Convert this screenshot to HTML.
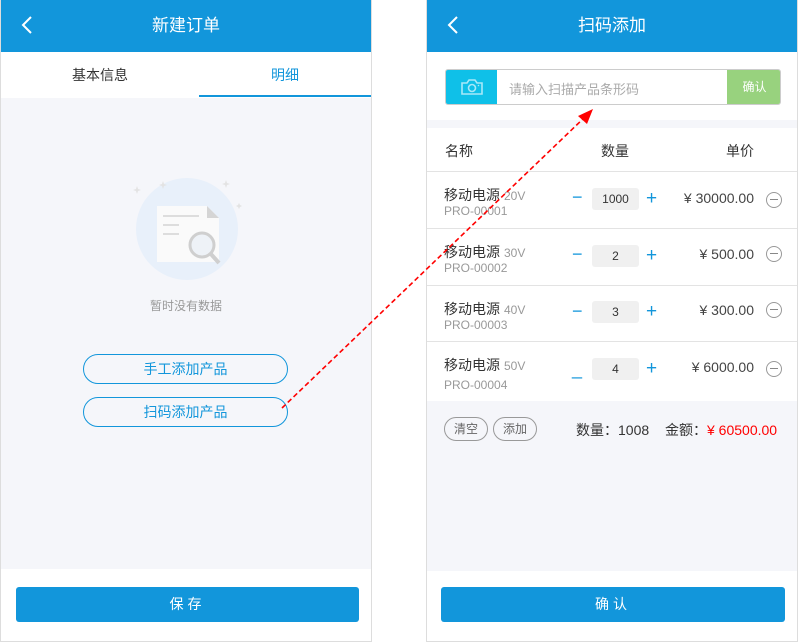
<!DOCTYPE html>
<html><head><meta charset="utf-8"><style>
*{margin:0;padding:0;box-sizing:border-box}
body{width:798px;height:642px;background:#fff;position:relative;overflow:hidden;font-family:"Liberation Sans","Noto Sans CJK SC",sans-serif;color:#333}
.a{position:absolute}
.panel{position:absolute;top:0;width:372px;height:642px;border:1px solid #ddd;border-top:none;background:#fff}
.hdr{position:absolute;left:0;top:0;right:0;height:52px;background:#1296db;color:#fff;font-size:17px;text-align:center;line-height:52px}
.back{position:absolute;left:20px;top:15px}
.btn{position:absolute;background:#1296db;color:#fff;font-size:14px;text-align:center;line-height:35px;border-radius:3px;letter-spacing:4px}
.ob{position:absolute;left:82px;width:205px;height:30px;border:1px solid #1296db;border-radius:15px;color:#1296db;font-size:14px;text-align:center;line-height:28px;background:#f5f6fa}
.row{position:absolute;left:0;right:0;border-top:1px solid #e3e3e3;background:#fff}
.nm{position:absolute;left:17px;top:13px;font-size:14px;color:#333}
.nm span{font-size:12px;color:#999;margin-left:4px}
.code{position:absolute;left:17px;font-size:12px;color:#999}
.mi{position:absolute;left:145px;font-size:18px;color:#1296db}
.pl{position:absolute;left:219px;font-size:19px;color:#1296db}
.q{position:absolute;left:165px;width:47px;height:22px;background:#f0f0f0;border-radius:3px;text-align:center;line-height:22px;font-size:12px}
.pr{position:absolute;right:43px;font-size:14px;color:#444}
.rm{position:absolute;right:15px;width:16px;height:16px;border:1px solid #999;border-radius:50%}
.rm:after{content:"";position:absolute;left:3px;top:6px;width:8px;height:1px;background:#888}
.tag{position:absolute;top:16px;height:24px;border:1px solid #999;border-radius:12px;font-size:12px;color:#666;line-height:22px;text-align:center}
</style></head><body>

<div class="panel" style="left:0">
 <div class="hdr">新建订单<svg class="back" width="12" height="20"><path d="M10 2 L2 10 L10 18" stroke="#fff" stroke-width="2" fill="none"/></svg></div>
 <div class="a" style="left:0;top:52px;width:198px;height:46px;text-align:center;line-height:46px;font-size:14px">基本信息</div>
 <div class="a" style="left:198px;top:52px;width:172px;height:46px;text-align:center;line-height:46px;font-size:14px;color:#1296db">明细</div>
 <div class="a" style="left:198px;top:95px;width:172px;height:2px;background:#1296db"></div>
 <div class="a" style="left:0;top:98px;width:370px;height:471px;background:#f5f6fa"></div>
 <svg class="a" style="left:120px;top:165px" width="140" height="125">
  <circle cx="66" cy="64" r="51" fill="#e8f0fa"/>
  <path d="M36 41 h50 l12 12 v44 h-62z" fill="#fafafa"/>
  <path d="M86 41 l12 12 h-12z" fill="#d5d5d5"/>
  <rect x="42" y="50" width="36" height="2" fill="#ddd"/><rect x="42" y="59" width="16" height="2" fill="#ddd"/><rect x="42" y="68" width="16" height="2" fill="#ddd"/>
  <circle cx="81" cy="80" r="12" fill="#eef2f7" stroke="#cfcfcf" stroke-width="3"/>
  <path d="M89 88 l9 10" stroke="#cfcfcf" stroke-width="4"/>
  <path d="M42 16 l1 3 3 1 -3 1 -1 3 -1-3 -3-1 3-1z M16 21 l1 3 3 1 -3 1 -1 3 -1-3 -3-1 3-1z M105 15 l1 3 3 1 -3 1 -1 3 -1-3 -3-1 3-1z M118 38 l1 2 2 1 -2 1 -1 2 -1-2 -2-1 2-1z" fill="#e3e3e3"/>
 </svg>
 <div class="a" style="left:0;width:370px;top:297px;text-align:center;font-size:12px;color:#999">暂时没有数据</div>
 <div class="ob" style="top:354px">手工添加产品</div>
 <div class="ob" style="top:397px">扫码添加产品</div>
 <div class="btn" style="left:15px;top:587px;width:343px;height:35px">保存</div>
</div>

<div class="panel" style="left:426px;width:372px">
 <div class="hdr">扫码添加<svg class="back" width="12" height="20"><path d="M10 2 L2 10 L10 18" stroke="#fff" stroke-width="2" fill="none"/></svg></div>
 <div class="a" style="left:18px;top:69px;width:336px;height:36px;border:1px solid #ccc;border-radius:3px;overflow:hidden">
  <div class="a" style="left:0;top:0;width:51px;height:36px;background:#0fc0e8"></div>
  <svg class="a" style="left:14px;top:7px" width="24" height="20"><path d="M2 6 h5 l2-3 h6 l2 3 h5 v11 h-20z" fill="none" stroke="#a8e8f8" stroke-width="1.6"/><circle cx="12" cy="11" r="3.5" fill="none" stroke="#a8e8f8" stroke-width="1.6"/><circle cx="18.5" cy="8.5" r="0.8" fill="#a8e8f8"/></svg>
  <div class="a" style="left:63px;top:9px;font-size:13px;color:#aaa">请输入扫描产品条形码</div>
  <div class="a" style="left:281px;top:-1px;width:55px;height:36px;background:#98d27e;color:#fff;font-size:12px;text-align:center;line-height:36px">确认</div>
 </div>
 <div class="a" style="left:0;top:120px;width:370px;height:8px;background:#f5f6fa"></div>
 <div class="a" style="left:18px;top:141px;font-size:14px">名称</div>
 <div class="a" style="left:174px;top:141px;font-size:14px">数量</div>
 <div class="a" style="left:299px;top:141px;font-size:14px">单价</div>
 <div class="row" style="top:171px;height:57px"><div class="nm">移动电源<span>20V</span></div><div class="code" style="top:32px">PRO-00001</div><div class="mi" style="top:15px">−</div><div class="q" style="top:16px">1000</div><div class="pl" style="top:16px">+</div><div class="pr" style="top:18px">¥ 30000.00</div><div class="rm" style="top:20px"></div></div>
 <div class="row" style="top:228px;height:57px"><div class="nm">移动电源<span>30V</span></div><div class="code" style="top:32px">PRO-00002</div><div class="mi" style="top:15px">−</div><div class="q" style="top:16px">2</div><div class="pl" style="top:16px">+</div><div class="pr" style="top:17px">¥ 500.00</div><div class="rm" style="top:17px"></div></div>
 <div class="row" style="top:285px;height:56px"><div class="nm">移动电源<span>40V</span></div><div class="code" style="top:32px">PRO-00003</div><div class="mi" style="top:15px">−</div><div class="q" style="top:15px">3</div><div class="pl" style="top:15px">+</div><div class="pr" style="top:16px">¥ 300.00</div><div class="rm" style="top:16px"></div></div>
 <div class="row" style="top:341px;height:60px"><div class="nm">移动电源<span>50V</span></div><div class="code" style="top:36px">PRO-00004</div><div class="mi" style="top:17px">_</div><div class="q" style="top:16px">4</div><div class="pl" style="top:16px">+</div><div class="pr" style="top:17px">¥ 6000.00</div><div class="rm" style="top:19px"></div></div>
 <div class="a" style="left:0;top:401px;width:370px;height:170px;background:#f5f6fa">
  <div class="tag" style="left:17px;width:44px">清空</div>
  <div class="tag" style="left:66px;width:44px">添加</div>
  <div class="a" style="left:149px;top:19px;font-size:14px">数量：1008</div>
  <div class="a" style="left:238px;top:19px;font-size:14px">金额：<span style="color:#f00">¥ 60500.00</span></div>
 </div>
 <div class="btn" style="left:14px;top:587px;width:344px;height:35px">确认</div>
</div>

<svg class="a" style="left:0;top:0" width="798" height="642">
 <path d="M282 408 L586 116" stroke="#f00" stroke-width="1.6" stroke-dasharray="5,3" fill="none"/>
 <path d="M593 109 L578 116 L587 124z" fill="#f00"/>
</svg>
</body></html>
